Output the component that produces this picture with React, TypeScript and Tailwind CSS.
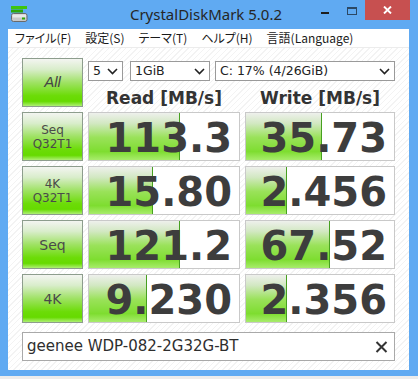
import React from "react";

type Row = {
  label: string[];
  big: boolean;
  read: string;
  readW: number;
  write: string;
  writeW: number;
};

const rows: Row[] = [
  { label: ["Seq", "Q32T1"], big: false, read: "113.3", readW: 91, write: "35.73", writeW: 76 },
  { label: ["4K", "Q32T1"], big: false, read: "15.80", readW: 64, write: "2.456", writeW: 41 },
  { label: ["Seq"], big: true, read: "121.2", readW: 91, write: "67.52", writeW: 84 },
  { label: ["4K"], big: true, read: "9.230", readW: 58, write: "2.356", writeW: 41 },
];

const btnBg =
  "bg-[linear-gradient(to_bottom,#f3f5f1_0%,#d9edcb_22%,#9fe264_50%,#6cdc08_78%,#66da00_90%,#aeef74_100%)]";
const fillBg =
  "bg-[linear-gradient(to_bottom,#eef0ec_0%,#d2e8c2_22%,#9ae25a_52%,#7edd30_82%,#a8ec6c_100%)]";

const Chevron: React.FC = () => (
  <svg width="11" height="7" viewBox="0 0 11 7" className="shrink-0">
    <path d="M1 1 L5.5 5.5 L10 1" fill="none" stroke="#222" strokeWidth="1.6" />
  </svg>
);

const Select: React.FC<{ value: string; w: string }> = ({ value, w }) => (
  <div
    className={`${w} h-[20px] flex items-center justify-between pl-[4px] pr-[4px] bg-white border border-[#9a9a9a] text-[12.5px] text-[#222] font-['DejaVu_Sans',sans-serif]`}
  >
    <span>{value}</span>
    <Chevron />
  </div>
);

const Result: React.FC<{ value: string; fill: number; w: string }> = ({ value, fill, w }) => (
  <div className={`relative ${w} h-[49px] bg-white border border-[#c9c9c9] flex items-center justify-end pr-[7px] pt-[3px]`}>
    <div
      className={`absolute left-0 top-0 bottom-0 ${fillBg} border-r border-[#46a020]`}
      style={{ width: fill }}
    />
    <span className="relative text-[40px] leading-none font-bold text-[#3d3d3d] font-['DejaVu_Sans',sans-serif]">
      {value}
    </span>
  </div>
);

const DiskIcon: React.FC = () => (
  <svg width="17" height="16" viewBox="0 0 17 16">
    <rect x="0" y="0" width="16" height="3" fill="#3ec40e" />
    <rect x="0" y="3.5" width="12" height="3" fill="#2ea808" />
    <rect x="0.5" y="7.5" width="15.5" height="8" rx="2" fill="#c8c8c8" stroke="#6a6a6a" />
    <rect x="1.5" y="8.5" width="13.5" height="3" fill="#e8e8e8" />
    <rect x="11" y="11.5" width="3" height="2" fill="#2ea808" />
  </svg>
);

export default function App() {
  return (
    <div className="w-[418px] h-[379px] bg-[#ececec] flex flex-col overflow-hidden">
      <div className="h-[376px] bg-[#60aaf2] flex flex-col pl-[8px] pr-[9px] pb-[6px]">
        {/* title bar */}
        <div className="h-[29px] -ml-[8px] -mr-[9px] flex items-start">
          <div className="w-[100px] pl-[11px] pt-[6px]">
            <DiskIcon />
          </div>
          <div className="flex-1 text-center pt-[4px] text-[15px] leading-[20px] text-[#262626] font-['Noto_Sans',sans-serif]">
            CrystalDiskMark 5.0.2
          </div>
          <div className="flex items-start mr-[8px]">
            <div className="w-[26px] h-[20px] flex justify-center pt-[12px]">
              <div className="w-[8px] h-[2px] bg-[#1e1e1e]" />
            </div>
            <div className="w-[27px] h-[20px] flex justify-center pt-[7px]">
              <div className="w-[10px] h-[8px] border border-t-2 border-[#2c4864]" />
            </div>
            <div className="w-[45px] h-[20px] bg-[#c75050] flex items-center justify-center">
              <svg width="9" height="8" viewBox="0 0 9 8">
                <path d="M1 0.5 L8 7.5 M8 0.5 L1 7.5" stroke="#fff" strokeWidth="1.9" />
              </svg>
            </div>
          </div>
        </div>

        {/* client */}
        <div className="flex-1 flex flex-col bg-white">
          <div className="h-[19px] border-b border-[#ececec] flex items-center gap-[14px] pl-[7px] text-[12px] text-[#1a1a1a] font-['Noto_Sans_CJK_JP',sans-serif] [font-feature-settings:'palt']">
            <span>ファイル(F)</span>
            <span>設定(S)</span>
            <span>テーマ(T)</span>
            <span>ヘルプ(H)</span>
            <span>言語(Language)</span>
          </div>

          <div className="flex-1 pt-[10px] pl-[14px] bg-[repeating-linear-gradient(135deg,#ffffff_0px,#ffffff_3px,#f3f3f3_3px,#f3f3f3_4px)]">
            <div className="grid grid-cols-[61px_152px_150px] gap-x-[5px] gap-y-[5px]">
              <div className={`h-[49px] border border-[#8d9d8d] ${btnBg} flex items-center justify-center`}>
                <span className="text-[15px] italic text-[#454545] font-['Liberation_Sans',sans-serif]">All</span>
              </div>
              <div className="col-span-2 h-[49px] flex flex-col">
                <div className="mt-[3px] flex">
                  <Select value="5" w="w-[35px]" />
                  <div className="ml-[7px]">
                    <Select value="1GiB" w="w-[80px]" />
                  </div>
                  <div className="ml-[5px]">
                    <Select value="C: 17% (4/26GiB)" w="w-[180px]" />
                  </div>
                </div>
                <div className="mt-[7px] flex text-[17px] leading-[20px] font-bold text-[#333] font-['DejaVu_Sans',sans-serif]">
                  <div className="w-[152px] text-center">Read [MB/s]</div>
                  <div className="ml-[5px] w-[150px] text-center">Write [MB/s]</div>
                </div>
              </div>

              {rows.map((r, i) => (
                <React.Fragment key={i}>
                  <div className={`h-[49px] border border-[#8d9d8d] ${btnBg} flex flex-col items-center justify-center text-[#4a4a4a] font-['DejaVu_Sans',sans-serif]`}>
                    {r.label.map((l) => (
                      <span key={l} className={r.big ? "text-[14px] leading-[16px]" : "text-[12px] leading-[14px]"}>
                        {l}
                      </span>
                    ))}
                  </div>
                  <Result value={r.read} fill={r.readW} w="w-[152px]" />
                  <Result value={r.write} fill={r.writeW} w="w-[150px]" />
                </React.Fragment>
              ))}
            </div>

            <div className="mt-[9px] w-[373px] h-[29px] bg-white border border-[#a9a9a9] flex items-center justify-between pl-[4px] pr-[6px]">
              <span className="text-[15px] text-[#2e2e2e] font-['DejaVu_Sans',sans-serif]">geenee WDP-082-2G32G-BT</span>
              <svg width="13" height="12" viewBox="0 0 13 12">
                <path d="M1.5 1 L11.5 11 M11.5 1 L1.5 11" stroke="#333" strokeWidth="2" />
              </svg>
            </div>
          </div>
        </div>
      </div>
    </div>
  );
}
